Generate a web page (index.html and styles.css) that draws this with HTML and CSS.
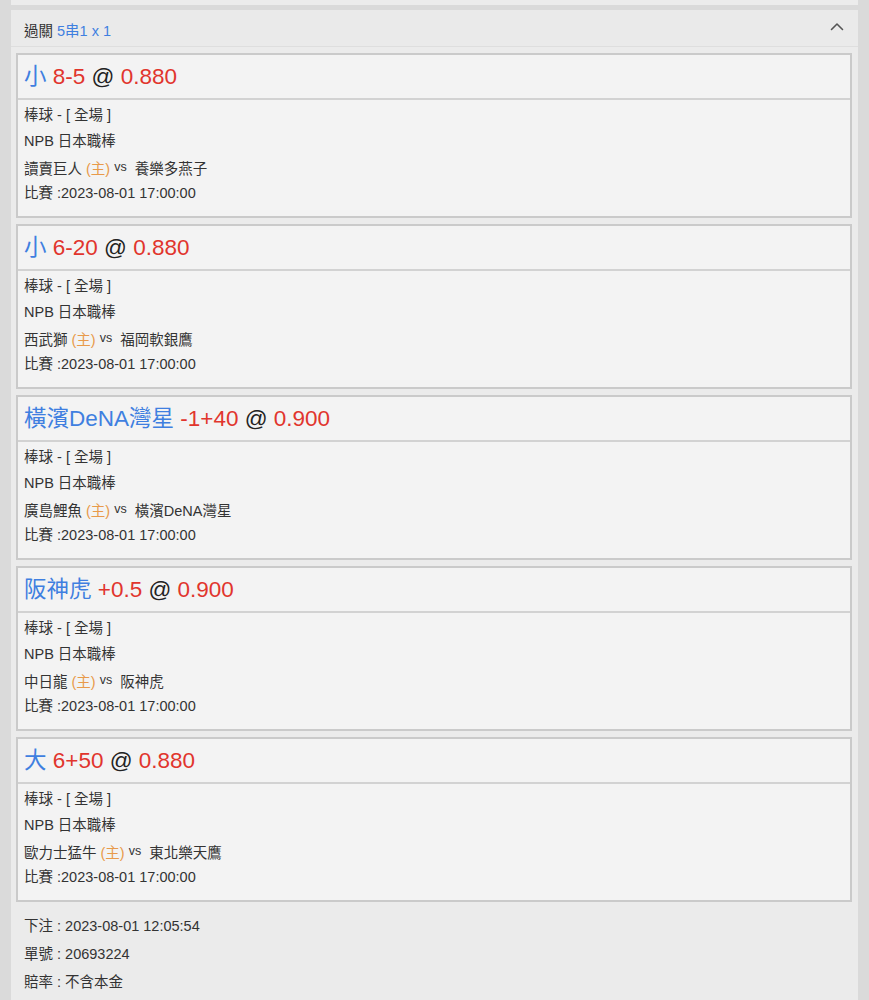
FILE: index.html
```html
<!DOCTYPE html>
<html lang="zh-Hant">
<head>
<meta charset="utf-8">
<link rel="stylesheet" href="styles.css">
</head>
<body>
<div class="page">
  <div class="prev"></div>
  <section class="panel">
    <header class="panel-head">
      <div class="head-title">過關 <span class="blue">5串1 x 1</span></div>
      <svg class="chev" width="14" height="9" viewBox="0 0 14 9"><path d="M1.5 7.5 L7 2 L12.5 7.5" fill="none" stroke="#555" stroke-width="1.6" stroke-linecap="round" stroke-linejoin="round"/></svg>
    </header>
    <div class="panel-body">
      <div class="card">
        <div class="card-title"><span class="blue">小</span> <span class="red">8-5</span> @ <span class="red">0.880</span></div>
        <div class="card-info">
          <div class="line">棒球 - [ 全場 ]</div>
          <div class="line">NPB 日本職棒</div>
          <div class="line">讀賣巨人 <span class="home">(主)</span> <span class="vs">vs</span>&nbsp; 養樂多燕子</div>
          <div class="line">比賽 :2023-08-01 17:00:00</div>
        </div>
      </div>
      <div class="card">
        <div class="card-title"><span class="blue">小</span> <span class="red">6-20</span> @ <span class="red">0.880</span></div>
        <div class="card-info">
          <div class="line">棒球 - [ 全場 ]</div>
          <div class="line">NPB 日本職棒</div>
          <div class="line">西武獅 <span class="home">(主)</span> <span class="vs">vs</span>&nbsp; 福岡軟銀鷹</div>
          <div class="line">比賽 :2023-08-01 17:00:00</div>
        </div>
      </div>
      <div class="card">
        <div class="card-title"><span class="blue">橫濱DeNA灣星</span> <span class="red">-1+40</span> @ <span class="red">0.900</span></div>
        <div class="card-info">
          <div class="line">棒球 - [ 全場 ]</div>
          <div class="line">NPB 日本職棒</div>
          <div class="line">廣島鯉魚 <span class="home">(主)</span> <span class="vs">vs</span>&nbsp; 橫濱DeNA灣星</div>
          <div class="line">比賽 :2023-08-01 17:00:00</div>
        </div>
      </div>
      <div class="card">
        <div class="card-title"><span class="blue">阪神虎</span> <span class="red">+0.5</span> @ <span class="red">0.900</span></div>
        <div class="card-info">
          <div class="line">棒球 - [ 全場 ]</div>
          <div class="line">NPB 日本職棒</div>
          <div class="line">中日龍 <span class="home">(主)</span> <span class="vs">vs</span>&nbsp; 阪神虎</div>
          <div class="line">比賽 :2023-08-01 17:00:00</div>
        </div>
      </div>
      <div class="card">
        <div class="card-title"><span class="blue">大</span> <span class="red">6+50</span> @ <span class="red">0.880</span></div>
        <div class="card-info">
          <div class="line">棒球 - [ 全場 ]</div>
          <div class="line">NPB 日本職棒</div>
          <div class="line">歐力士猛牛 <span class="home">(主)</span> <span class="vs">vs</span>&nbsp; 東北樂天鷹</div>
          <div class="line">比賽 :2023-08-01 17:00:00</div>
        </div>
      </div>
      <div class="footer-info">
        <div class="fline">下注 : 2023-08-01 12:05:54</div>
        <div class="fline">單號 : 20693224</div>
        <div class="fline">賠率 : 不含本金</div>
      </div>
    </div>
  </section>
</div>
</body>
</html>
```

FILE: styles.css
```css
html, body {
  margin: 0;
  padding: 0;
}
body {
  background: #dadada;
  font-family: "Liberation Sans", "Noto Sans CJK TC", sans-serif;
  color: #333;
  height: 1000px;
  overflow: hidden;
}
.page {
  padding-left: 11px;
  width: 847px;
}
.prev {
  height: 5px;
  background: #ececec;
  margin-bottom: 5px;
}
.panel {
  background: #ebebeb;
}
.panel-head {
  height: 36px;
  border-bottom: 1px solid #dedede;
  display: flex;
  align-items: center;
  justify-content: space-between;
  padding: 0 14px 0 13px;
  background: #eaeaea;
}
.head-title {
  font-size: 14.5px;
  color: #333;
  padding-top: 2px;
}
.chev {
  margin-top: -4px;
}
.blue { color: #3f7fe0; }
.red { color: #e1352d; }
.home { color: #e89a4a; }
.vs {
  font-size: 12.5px;
  vertical-align: 3px;
}
.panel-body {
  padding: 6px 6px 10px 5px;
  display: flex;
  flex-direction: column;
  gap: 6px;
}
.card {
  border: 2px solid #cacaca;
  background: #f3f3f3;
}
.card-title {
  height: 43px;
  overflow: hidden;
  border-bottom: 2px solid #d2d2d2;
  padding: 0 6px;
  font-size: 22.5px;
  line-height: 43px;
  color: #222;
}
.card-info {
  padding: 2px 6px 10px;
  font-size: 14.5px;
  color: #333;
}
.line {
  height: 26px;
  line-height: 26px;
  overflow: hidden;
  white-space: nowrap;
}
.footer-info {
  padding: 4px 8px 0;
  font-size: 14.5px;
  color: #333;
}
.fline {
  height: 28px;
  line-height: 28px;
  overflow: hidden;
  white-space: nowrap;
}
```
